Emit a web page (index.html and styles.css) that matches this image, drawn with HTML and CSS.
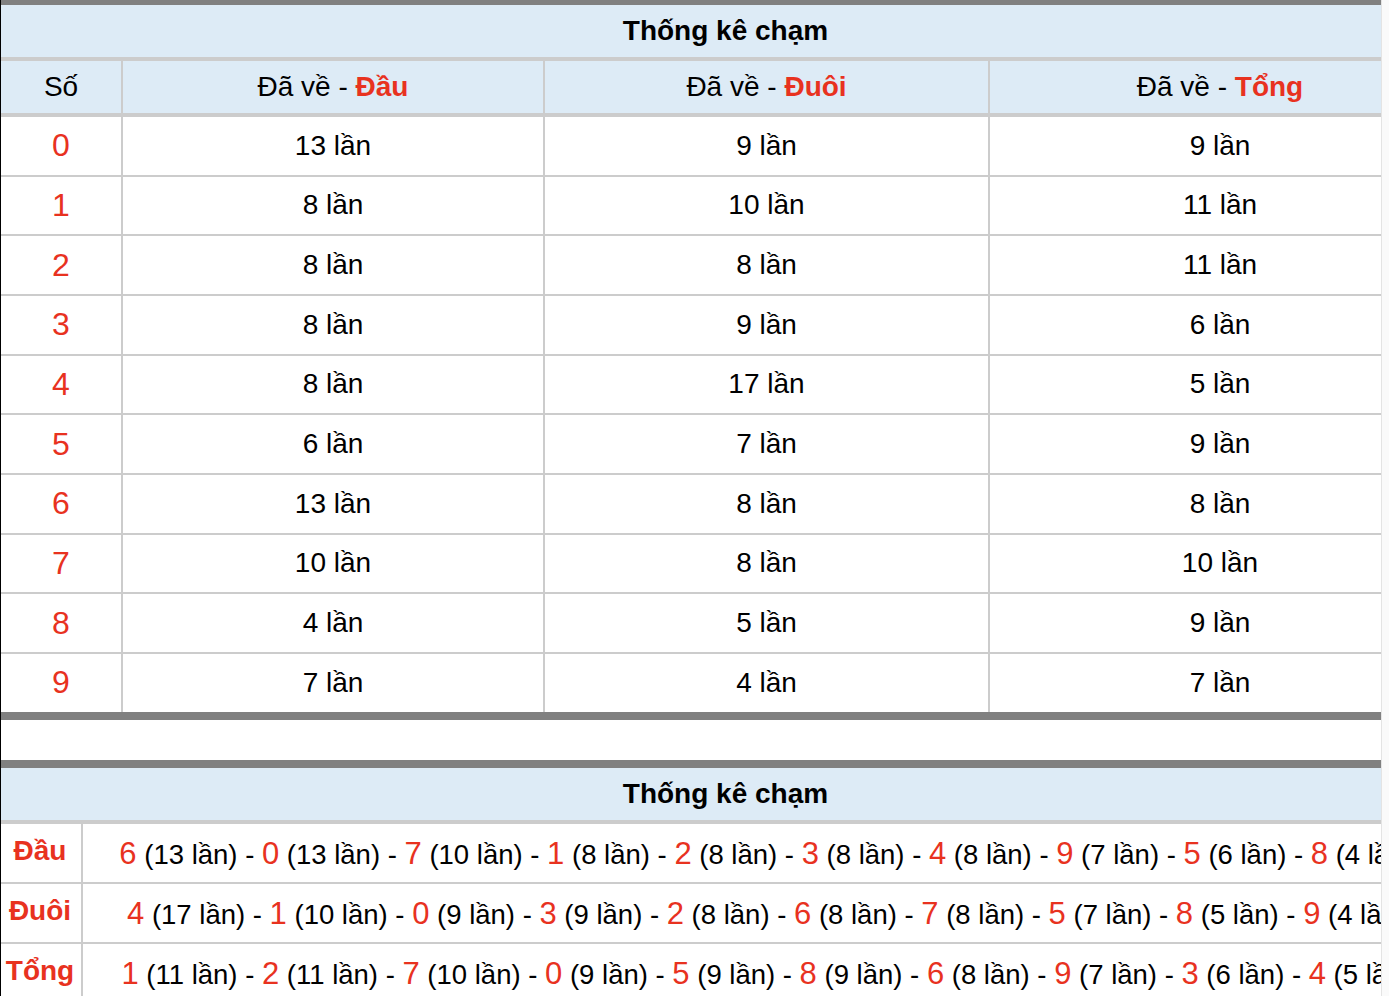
FILE: index.html
```html
<!DOCTYPE html>
<html lang="vi">
<head>
<meta charset="utf-8">
<title>Thống kê chạm</title>
<link rel="stylesheet" href="styles.css">
</head>
<body>
<div class="page">
  <div class="viewport">
    <section class="stats">
      <div class="title">Thống kê chạm</div>
      <div class="grid head">
        <div class="cell">Số</div>
        <div class="cell"><span>Đã về - <b class="hl">Đầu</b></span></div>
        <div class="cell"><span>Đã về - <b class="hl">Đuôi</b></span></div>
        <div class="cell"><span>Đã về - <b class="hl">Tổng</b></span></div>
      </div>
      <div class="grid row"><div class="cell num">0</div><div class="cell">13 lần</div><div class="cell">9 lần</div><div class="cell">9 lần</div></div>
      <div class="grid row"><div class="cell num">1</div><div class="cell">8 lần</div><div class="cell">10 lần</div><div class="cell">11 lần</div></div>
      <div class="grid row"><div class="cell num">2</div><div class="cell">8 lần</div><div class="cell">8 lần</div><div class="cell">11 lần</div></div>
      <div class="grid row"><div class="cell num">3</div><div class="cell">8 lần</div><div class="cell">9 lần</div><div class="cell">6 lần</div></div>
      <div class="grid row"><div class="cell num">4</div><div class="cell">8 lần</div><div class="cell">17 lần</div><div class="cell">5 lần</div></div>
      <div class="grid row"><div class="cell num">5</div><div class="cell">6 lần</div><div class="cell">7 lần</div><div class="cell">9 lần</div></div>
      <div class="grid row"><div class="cell num">6</div><div class="cell">13 lần</div><div class="cell">8 lần</div><div class="cell">8 lần</div></div>
      <div class="grid row"><div class="cell num">7</div><div class="cell">10 lần</div><div class="cell">8 lần</div><div class="cell">10 lần</div></div>
      <div class="grid row"><div class="cell num">8</div><div class="cell">4 lần</div><div class="cell">5 lần</div><div class="cell">9 lần</div></div>
      <div class="grid row last"><div class="cell num">9</div><div class="cell">7 lần</div><div class="cell">4 lần</div><div class="cell">7 lần</div></div>
    </section>

    <section class="summary">
      <div class="title">Thống kê chạm</div>
      <div class="sgrid">
        <div class="label">Đầu</div>
        <div class="line"><span><span class="d">6</span> (13 lần) - <span class="d">0</span> (13 lần) - <span class="d">7</span> (10 lần) - <span class="d">1</span> (8 lần) - <span class="d">2</span> (8 lần) - <span class="d">3</span> (8 lần) - <span class="d">4</span> (8 lần) - <span class="d">9</span> (7 lần) - <span class="d">5</span> (6 lần) - <span class="d">8</span> (4 lần)</span></div>
      </div>
      <div class="sgrid">
        <div class="label">Đuôi</div>
        <div class="line"><span><span class="d">4</span> (17 lần) - <span class="d">1</span> (10 lần) - <span class="d">0</span> (9 lần) - <span class="d">3</span> (9 lần) - <span class="d">2</span> (8 lần) - <span class="d">6</span> (8 lần) - <span class="d">7</span> (8 lần) - <span class="d">5</span> (7 lần) - <span class="d">8</span> (5 lần) - <span class="d">9</span> (4 lần)</span></div>
      </div>
      <div class="sgrid">
        <div class="label">Tổng</div>
        <div class="line"><span><span class="d">1</span> (11 lần) - <span class="d">2</span> (11 lần) - <span class="d">7</span> (10 lần) - <span class="d">0</span> (9 lần) - <span class="d">5</span> (9 lần) - <span class="d">8</span> (9 lần) - <span class="d">6</span> (8 lần) - <span class="d">9</span> (7 lần) - <span class="d">3</span> (6 lần) - <span class="d">4</span> (5 lần)</span></div>
      </div>
    </section>
  </div>
  <div class="scrollbar"></div>
</div>
</body>
</html>
```

FILE: styles.css
```css
html, body {
  margin: 0;
  padding: 0;
  background: #ffffff;
}

body {
  font-family: "Liberation Sans", Arial, Helvetica, sans-serif;
  color: #000000;
}

.page {
  display: flex;
  width: 1389px;
  height: 996px;
  overflow: hidden;
}

.viewport {
  width: 1380px;
  flex: none;
  overflow: hidden;
  border-left: 1px solid #000000;
}

.scrollbar {
  flex: 1;
  background: #fafafa;
  border-left: 1px solid #e4e4e4;
}

.stats,
.summary {
  width: 1449px;
}

.stats {
  border-top: 5px solid #808080;
  border-bottom: 8px solid #808080;
}

.summary {
  margin-top: 40px;
  border-top: 8px solid #808080;
}

.title {
  height: 52px;
  background: #ddebf6;
  border-bottom: 4px solid #cccccc;
  display: flex;
  align-items: center;
  justify-content: center;
  font-weight: bold;
  font-size: 28px;
}

.grid {
  display: grid;
  grid-template-columns: 120px 420px 443px 460px;
  column-gap: 2px;
  background: #cccccc;
}

.cell {
  display: flex;
  align-items: center;
  justify-content: center;
  font-size: 28px;
  white-space: nowrap;
}

.head {
  height: 52px;
  border-bottom: 4px solid #cccccc;
}

.head .cell {
  background: #ddebf6;
}

.hl {
  color: #e8321f;
  font-weight: bold;
}

.row {
  height: 57.67px;
  border-bottom: 2px solid #cccccc;
}

.row.last {
  border-bottom: 0;
}

.row .cell {
  background: #ffffff;
}

.num {
  color: #e8321f;
  font-size: 32px;
}

.sgrid {
  display: grid;
  grid-template-columns: 80px 1367px;
  column-gap: 2px;
  background: #cccccc;
  height: 58px;
  border-bottom: 2px solid #cccccc;
}

.label {
  background: #ffffff;
  color: #e8321f;
  font-weight: bold;
  font-size: 28px;
  display: flex;
  align-items: center;
  justify-content: center;
  padding-right: 2px;
  padding-bottom: 4px;
}

.line {
  background: #ffffff;
  display: flex;
  align-items: center;
  justify-content: center;
  white-space: pre;
  font-size: 27.5px;
  padding-top: 2px;
}

.d {
  color: #e8321f;
  font-size: 31px;
}
```
